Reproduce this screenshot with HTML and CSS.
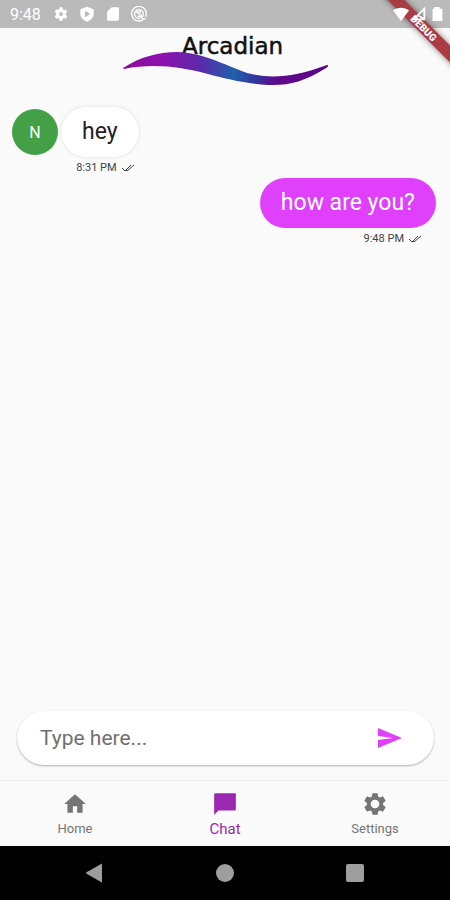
FILE: index.html
```html
<!DOCTYPE html>
<html lang="en">
<head>
  <meta charset="utf-8">
  <title>Arcadian</title>
  <meta name="viewport" content="width=device-width, initial-scale=1">
  <link rel="stylesheet" href="styles.css">
</head>
<body>

  <div class="status-bar">
    <span class="clock">9:48</span>
    <div class="status-left">
      <svg class="status-icon" viewBox="0 0 24 24"><path d="M19.14 12.94c.04-.3.06-.61.06-.94s-.02-.64-.07-.94l2.03-1.58a.49.49 0 0 0 .12-.61l-1.92-3.32a.49.49 0 0 0-.59-.22l-2.39.96a7 7 0 0 0-1.62-.94l-.36-2.54A.48.48 0 0 0 13.92 2h-3.84a.48.48 0 0 0-.48.41l-.36 2.54a7 7 0 0 0-1.62.94l-2.39-.96a.48.48 0 0 0-.59.22L2.730 8.470a.48.48 0 0 0 .12.61l2.030 1.580a7 7 0 0 0 0 2.680l-2.030 1.580a.49.49 0 0 0-.12.61l1.920 3.320c.12.22.37.29.59.22l2.390-.96c.5.38 1.030.7 1.620.94l.36 2.540c.05.24.24.41.48.41h3.840c.24 0 .44-.17.47-.41l.36-2.540a7 7 0 0 0 1.620-.94l2.390.96c.22.08.47 0 .59-.22l1.920-3.320a.48.48 0 0 0-.12-.61zM12 15a3 3 0 1 1 0-6 3 3 0 0 1 0 6z"/></svg>
      <svg class="status-icon" viewBox="0 0 24 24"><path fill-rule="evenodd" d="M12 1L2 5v7c0 5 4 9.500 10 11.500 6-2 10-6.500 10-11.500V5zM9 7l8 5-8 5z"/></svg>
      <svg class="status-icon" viewBox="0 0 24 24"><path d="M19 2h-9L3 9v11a2 2 0 0 0 2 2h14a2 2 0 0 0 2-2V4a2 2 0 0 0-2-2z"/></svg>
      <svg class="status-icon" viewBox="0 0 24 24"><g fill="none" stroke="#fff" stroke-width="2"><path d="M20 19a11 11 0 1 1 2-3"/><circle cx="12" cy="12" r="6.500"/><path d="M7 7l10 10M10 8h4v3M16 13a4 4 0 0 1-6 2"/><path d="M17 19h5"/></g></svg>
    </div>
    <div class="status-right">
      <svg class="status-icon" viewBox="0 0 18 18"><path d="M9 17L0 5C5 1 13 1 18 5z"/></svg>
      <svg class="status-icon" viewBox="0 0 18 18"><path d="M15 3v12H3zM7 10l8 5" fill="none" stroke="#fff" stroke-width="2"/></svg>
      <svg class="status-icon" viewBox="0 0 18 18"><path d="M6 1h6v2h3v14H4V3h2z"/></svg>
    </div>
  </div>

  <svg class="debug-banner" viewBox="0 0 70 70">
    <g transform="translate(44 28) rotate(45)">
      <rect class="ribbon" x="-60" y="-6" width="120" height="12"/>
      <text class="ribbon-text" y="4">DEBUG</text>
    </g>
  </svg>

  <header class="header">
    <svg class="logo" viewBox="0 0 230 64" role="img" aria-label="Arcadian">
      <defs>
        <linearGradient id="wave">
          <stop offset="0" stop-color="#8a0a98"/>
          <stop offset=".2" stop-color="#8c12b0"/>
          <stop offset=".38" stop-color="#5a2aaa"/>
          <stop offset=".54" stop-color="#2060aa"/>
          <stop offset=".66" stop-color="#34309c"/>
          <stop offset=".74" stop-color="#5e0a8c"/>
          <stop offset="1" stop-color="#5a0585"/>
        </linearGradient>
      </defs>
      <text class="logo-text" x="72" y="26">Arcadian</text>
      <path fill="url(#wave)" d="M13 40C30 29 48 24 67 24C94 25 112 36 137 45C160 51 182 50 217 37C219 37 218 39 216 40C195 53 181 57 163 57C142 57 116 51 98 46C72 39 43 35 14 41z"/>
    </svg>
  </header>

  <main class="messages">
    <div class="message">
      <div class="avatar">N</div>
      <div class="message-body">
        <p class="bubble">hey</p>
        <p class="time">8:31 PM
          <svg class="ticks" viewBox="0 0 14 10"><path d="M1 5l3 3 6-6M5 7l1 1 7-6"/></svg>
        </p>
      </div>
    </div>
    <div class="message sent">
      <div class="message-body">
        <p class="bubble">how are you?</p>
        <p class="time">9:48 PM
          <svg class="ticks" viewBox="0 0 14 10"><path d="M1 5l3 3 6-6M5 7l1 1 7-6"/></svg>
        </p>
      </div>
    </div>
  </main>

  <form class="composer">
    <input class="composer-input" type="text" placeholder="Type here..." aria-label="Message">
    <button class="send-button" type="button" aria-label="Send">
      <svg class="send-icon" viewBox="0 0 24 20"><path d="M0 0l24 10L0 20v-8l15-2L0 8z"/></svg>
    </button>
  </form>

  <nav class="tabs">
    <a class="tab" href="#home">
      <svg class="tab-icon" viewBox="0 0 24 24"><path d="M10 20v-6h4v6h5v-8h3L12 3 2 12h3v8z"/></svg>
      Home
    </a>
    <a class="tab active" href="#chat">
      <svg class="tab-icon" viewBox="0 0 24 24"><path d="M22 2H3a1 1 0 0 0-1 1v19l4-4h15a1 1 0 0 0 1-1z"/></svg>
      Chat
    </a>
    <a class="tab" href="#settings">
      <svg class="tab-icon" viewBox="0 0 24 24"><path d="M19.430 12.980c.04-.32.07-.64.07-.98s-.03-.66-.07-.98l2.110-1.650c.19-.15.24-.42.12-.64l-2-3.460c-.12-.22-.39-.3-.61-.22l-2.490 1c-.52-.4-1.080-.73-1.690-.98l-.38-2.650A.49.49 0 0 0 14 2h-4c-.25 0-.46.18-.49.42l-.38 2.650c-.61.25-1.170.59-1.690.98l-2.490-1c-.23-.09-.49 0-.61.22l-2 3.460c-.13.22-.07.49.12.64l2.110 1.650c-.04.32-.07.65-.07.98s.03.66.07.98l-2.110 1.650c-.19.15-.24.42-.12.64l2 3.460c.12.22.39.3.61.22l2.490-1c.52.4 1.080.73 1.690.98l.38 2.650c.03.24.24.42.49.42h4c.25 0 .46-.18.49-.42l.38-2.650c.61-.25 1.170-.59 1.690-.98l2.490 1c.23.09.49 0 .61-.22l2-3.460c.12-.22.07-.49-.12-.64zM12 16a4 4 0 1 1 0-8 4 4 0 0 1 0 8z"/></svg>
      Settings
    </a>
  </nav>

  <div class="system-nav">
    <button class="system-button" aria-label="Back"><svg class="system-icon" viewBox="0 0 20 20"><path d="M17 1v18q0 1-1 0L2 11q-2-1 0-2L16 1q1-1 1 0z"/></svg></button>
    <button class="system-button" aria-label="Home"><svg class="system-icon" viewBox="0 0 20 20"><circle cx="10" cy="10" r="9"/></svg></button>
    <button class="system-button" aria-label="Recent apps"><svg class="system-icon" viewBox="0 0 20 20"><rect x="1" y="1" width="18" height="18" rx="2"/></svg></button>
  </div>

</body>
</html>
```

FILE: styles.css
```css
* {
  box-sizing: border-box;
}

body {
  position: relative;
  display: flex;
  flex-direction: column;
  min-height: 100vh;
  margin: 0;
  background-color: #fafafa;
  color: #222;
  font-family: Roboto, sans-serif;
}

p {
  margin: 0;
}

button {
  display: flex;
  padding: 0;
  border: none;
  background: none;
  cursor: pointer;
}

.status-bar {
  display: flex;
  align-items: center;
  height: 28px;
  padding: 0 5px 0 10px;
  background-color: #bababa;
  color: white;
}

.clock {
  font-size: 16px;
}

.status-left {
  display: flex;
  gap: 10px;
  margin-left: 12px;
}

.status-right {
  position: relative;
  z-index: 2;
  display: flex;
  gap: 2px;
  margin-left: auto;
}

.status-icon {
  width: 16px;
  height: 16px;
  fill: white;
}

/* corner ribbon */
.debug-banner {
  position: absolute;
  top: 0;
  right: 0;
  z-index: 1;
  width: 70px;
  height: 70px;
}

.ribbon {
  fill: #a83b44;
  filter: drop-shadow(0 0 3px rgba(0, 0, 0, 0.5));
}

.ribbon-text {
  fill: white;
  font-size: 10px;
  font-weight: 900;
  text-anchor: middle;
}

.header {
  display: flex;
  justify-content: center;
}

.logo {
  width: 230px;
  height: 64px;
}

.logo-text {
  fill: #111;
  stroke: #111;
  stroke-width: 0.5px;
  font-family: "DejaVu Sans", sans-serif;
  font-size: 23px;
}

.messages {
  display: flex;
  flex: 1;
  flex-direction: column;
  padding: 15px 14px 14px 12px;
}

.message {
  display: flex;
  align-items: flex-start;
  gap: 3px;
}

.sent {
  justify-content: flex-end;
}

.message-body {
  display: flex;
  flex-direction: column;
  align-items: flex-end;
}

.avatar {
  display: flex;
  align-items: center;
  justify-content: center;
  width: 46px;
  height: 46px;
  margin-top: 2px;
  border-radius: 50%;
  background-color: #43a047;
  color: white;
  font-size: 16px;
}

.bubble {
  padding: 0 21px;
  border-radius: 26px;
  background-color: white;
  box-shadow: 0 0 3px rgba(0, 0, 0, 0.15);
  font-size: 23px;
  line-height: 50px;
}

.sent .bubble {
  background-color: #e040fb;
  box-shadow: none;
  color: white;
}

.time {
  display: flex;
  align-items: center;
  gap: 4px;
  padding: 0 14px 0 0;
  color: #444;
  font-size: 11px;
  line-height: 21px;
}

.message:not(.sent) .time {
  padding-right: 4px;
}

.ticks {
  width: 14px;
  height: 10px;
  fill: none;
  stroke: #444;
  stroke-width: 1;
}

.composer {
  display: flex;
  align-items: center;
  height: 54px;
  margin: 0 16px 15px 17px;
  padding: 0 32px 0 23px;
  border-radius: 27px;
  background-color: white;
  box-shadow: 0 1px 2px rgba(0, 0, 0, 0.3);
}

.composer-input {
  flex: 1;
  min-width: 0;
  padding: 0;
  border: none;
  outline: none;
  background: none;
  font-family: inherit;
  font-size: 21px;
}

.composer-input::placeholder {
  color: #707070;
}

.send-icon {
  width: 24px;
  height: 20px;
  fill: #e040fb;
}

.tabs {
  display: flex;
  height: 66px;
  border-top: 1px solid #eee;
}

.tab {
  display: flex;
  flex: 1;
  flex-direction: column;
  align-items: center;
  justify-content: center;
  gap: 3px;
  padding-top: 1px;
  color: #757575;
  font-size: 13px;
  line-height: 18px;
  text-decoration: none;
}

.active {
  color: #9c27b0;
  font-size: 15px;
}

.tab-icon {
  width: 26px;
  height: 26px;
  fill: currentColor;
}

.system-nav {
  display: flex;
  align-items: center;
  justify-content: center;
  gap: 110px;
  height: 54px;
  background-color: black;
}

.system-icon {
  width: 20px;
  height: 20px;
  fill: #9e9e9e;
}
```
